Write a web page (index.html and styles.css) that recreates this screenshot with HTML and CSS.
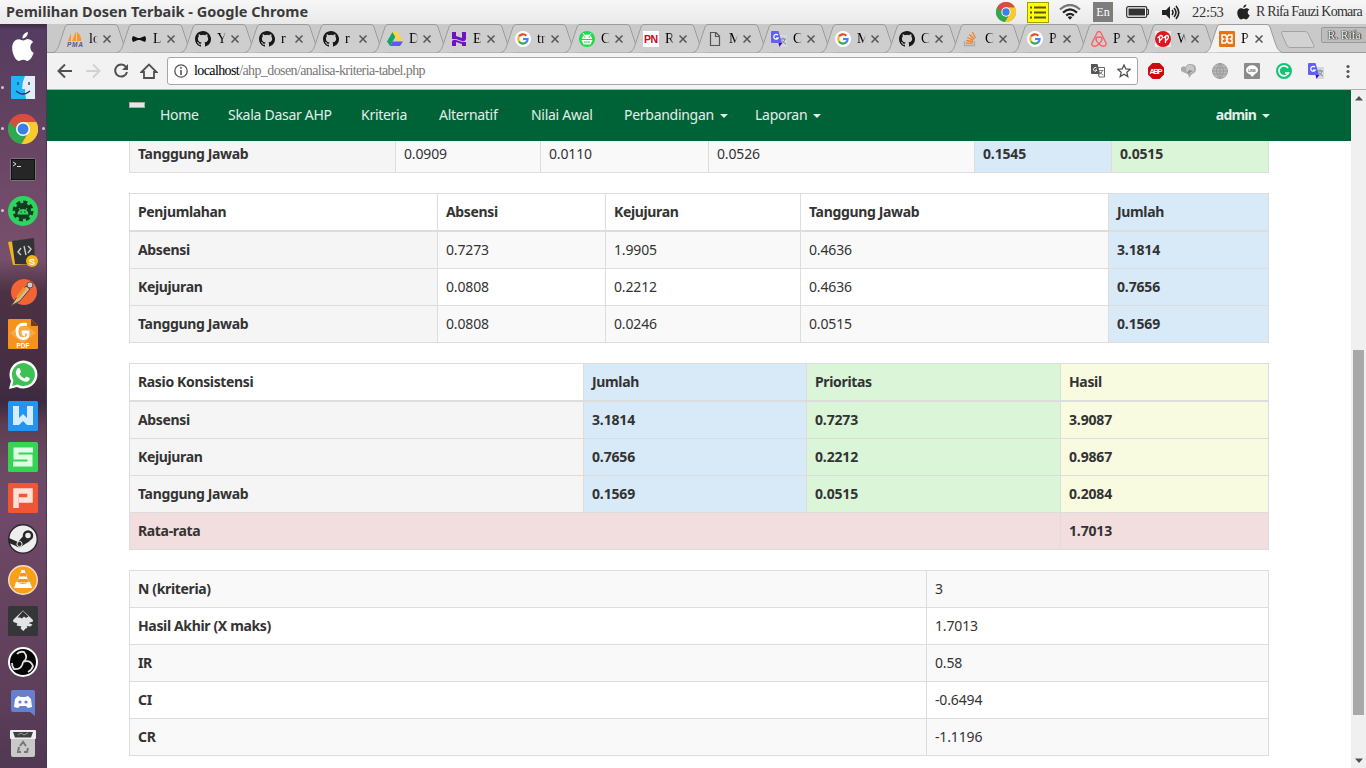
FILE: index.html
```html
<!DOCTYPE html>
<html lang="id">
<head>
<meta charset="utf-8">
<title>Pemilihan Dosen Terbaik</title>
<link rel="stylesheet" href="styles.css">
</head>
<body>
<svg class="defs" width="0" height="0">
  <symbol id="shape" viewBox="0 0 78 29"><path d="M0 28.5C5 27 5 24 12 3Q13 .5 15 .5H62Q64 .5 65 3C72 24 72 27 78 28.5" fill="currentColor" stroke="#9b9b9b"/></symbol>
  <symbol id="close" viewBox="0 0 8 8"><path d="M.5 .5l7 7M7.500 .5l-7 7" stroke="#555" stroke-width="1.5"/></symbol>
  <symbol id="github" viewBox="0 0 16 16"><path fill="#191717" d="M8 0C3.580 0 0 3.580 0 8c0 3.540 2.290 6.530 5.470 7.590.4.070.55-.17.55-.38 0-.19-.010-.82-.010-1.490-2.010.37-2.530-.49-2.690-.94-.090-.23-.48-.94-.82-1.130-.28-.15-.68-.52-.010-.53.630-.010 1.080.58 1.230.82.720 1.210 1.870.87 2.330.66.070-.52.28-.87.510-1.070-1.780-.2-3.640-.89-3.640-3.950 0-.87.310-1.590.82-2.150-.080-.2-.36-1.020.080-2.120 0 0 .67-.21 2.200.82a7.600 7.600 0 0 1 4 0c1.530-1.040 2.200-.82 2.200-.82.440 1.100.16 1.920.080 2.120.510.56.82 1.270.82 2.150 0 3.070-1.870 3.750-3.650 3.950.29.25.54.73.54 1.480 0 1.070-.010 1.930-.010 2.200 0 .21.15.46.55.38A8 8 0 0 0 8 0z"/></symbol>
  <symbol id="google" viewBox="0 0 16 16"><circle cx="8" cy="8" r="8" fill="#fff"/><g fill="none" stroke-width="2.200"><path d="M4 5.500A4.600 4.600 0 0 1 11.300 4.700" stroke="#ea4335"/><path d="M4 5.500a4.800 4.800 0 0 0 0 5" stroke="#fbbc05"/><path d="M4 10.500a4.700 4.700 0 0 0 7.200.8" stroke="#34a853"/><path d="M8 8h4.600a4.600 4.600 0 0 1-1.400 3.400" stroke="#4285f4"/></g></symbol>
  <symbol id="gtrans" viewBox="0 0 16 16"><path d="M7 4h9v12H9z" fill="#d5d8dc"/><path d="M9.500 8h5.500M12 6.500V8M14 8c-.6 2.500-2 4-4 5M11 9.500c1 1.600 2 2.500 4 3.500" stroke="#71869a" fill="none"/><path d="M1 0h6.500L11 12H1Q0 12 0 11V1Q0 0 1 0z" fill="#6360f5"/><path d="M7.500 12H11l-2.500 4z" fill="#4b00b5"/><path d="M7 4.200A2.400 2.400 0 1 0 7.300 7H5" fill="none" stroke="#fff" stroke-width="1.200"/></symbol>
  <symbol id="apple" viewBox="0 0 24 24"><path d="M16.500 0c.2 2.800-2.400 5.400-5 5.300C11.200 2.700 13.800.3 16.500 0zM21.900 17.200c-1.200 3.100-3.500 6.600-5.700 6.700-1.600 0-2.200-1-4-1s-2.500 1-4 1C5.500 24 2 18.500 2 13.300 2 8.700 5 6 8 6c1.700 0 3 1.100 4.200 1.100S14.900 5.800 17 5.900c1.500.1 3.300.8 4.300 2.400-3.700 2.200-3.100 7.400.6 8.900z" fill="currentColor"/></symbol>
  <symbol id="chrome" viewBox="0 0 30 30"><circle cx="15" cy="15" r="15" fill="#dd4b3e"/><path d="M2 7.500A15 15 0 0 0 13.500 30L20 18z" fill="#2da94f"/><path d="M15 8H28.300A15 15 0 0 1 13.500 30L20.500 18z" fill="#f7cb2d"/><path d="M2 7.500L9 18l6-10z" fill="#2da94f"/><path d="M2 7.500A15 15 0 0 1 28.300 8H15a7 7 0 0 0-6.500 4.500L6.500 14z" fill="#dd4b3e"/><circle cx="15" cy="15" r="7" fill="#fff"/><circle cx="15" cy="15" r="5.500" fill="#3d7fe6"/></symbol>
</svg>

<div class="screen">
  <header class="panel">
    <div class="panel-title">Pemilihan Dosen Terbaik - Google Chrome</div>
    <div class="indicators">
      <svg class="i-chrome" width="20" height="20"><use href="#chrome"/></svg>
      <svg class="i-list" width="22" height="21" viewBox="0 0 22 21"><rect x=".5" y=".5" width="21" height="20" fill="#ff0" stroke="#a0a000"/><path d="M3 5.500h2M3 10.500h2M3 15.500h2M7 5.500h12M7 10.500h12M7 15.500h12" stroke="#55551a" stroke-width="1.800"/></svg>
      <svg class="i-wifi" width="22" height="16" viewBox="0 0 22 16"><g fill="none" stroke-width="2.300"><path d="M1 5.500Q11-3.500 21 5.500" stroke="#777"/><path d="M4 8.600q7-6.400 14 0M7.200 11.500q3.800-3.200 7.600 0" stroke="#222"/></g><path d="M8.700 13.200q2.300-1.800 4.600 0L11 15.700z" fill="#222"/></svg>
      <span class="lang">En</span>
      <svg class="i-batt" width="24" height="12" viewBox="0 0 24 12"><rect x=".7" y=".7" width="20" height="10.600" rx="1.500" fill="#fff" stroke="#333" stroke-width="1.300"/><rect x="2.500" y="2.500" width="16.500" height="7" fill="#333"/><path d="M21 3.500h1.500v5H21" fill="none" stroke="#333"/></svg>
      <svg class="i-vol" width="18" height="15" viewBox="0 0 18 15"><path d="M0 5h4l4-4v13l-4-4H0z" fill="#222"/><path d="M10 5q2 2.500 0 5M12 3q4 4.500 0 9M14 1q5.500 6.500 0 13" fill="none" stroke="#222" stroke-width="1.600"/></svg>
      <span class="clock">22:53</span>
      <svg class="i-apple" width="15" height="16"><use href="#apple"/></svg>
      <span class="user">R Rifa Fauzi Komara</span>
    </div>
  </header>

  <aside class="dock">
    <div class="app"><svg width="26" height="29" viewBox="0 0 24 24" preserveAspectRatio="none"><use href="#apple"/></svg></div>
    <div class="app run"><svg width="24" height="23" viewBox="0 0 24 23"><rect width="24" height="23" rx="1" fill="#20b4f8"/><path d="M14 0h10v23H15Q14 17 14 13h-3Q11 6 14 0z" fill="#e3ecf7"/><path d="M7 6v3M18 6v3M5 15q7 6 14 0" fill="none" stroke="#1b355b" stroke-width="1.300"/></svg></div>
    <div class="app run focus"><svg width="30" height="30"><use href="#chrome"/></svg></div>
    <div class="app"><svg width="26" height="23" viewBox="0 0 26 23"><rect x=".5" y=".5" width="25" height="22" rx="1" fill="#262626" stroke="#777"/><rect x="1.500" y="1.500" width="23" height="20" fill="none" stroke="#111"/><path d="M3 4l3 2-3 2M7 8.500h4" stroke="#ddd" fill="none"/></svg></div>
    <div class="app run"><svg width="30" height="30" viewBox="0 0 30 30"><circle cx="15" cy="15" r="15" fill="#2fd45e"/><circle cx="15" cy="15" r="8" fill="#153b22"/><circle cx="15" cy="15" r="9" fill="none" stroke="#153b22" stroke-width="3" stroke-dasharray="4.070 3"/><path d="M9.500 18.500a5.500 5.500 0 0 1 11 0z" fill="#2fd45e"/><path d="M11 12l1.500 2.500M19 12l-1.500 2.500" stroke="#2fd45e"/><path d="M12.500 16h1.500M16 16h1.500" stroke="#153b22"/></svg></div>
    <div class="app"><svg width="30" height="30" viewBox="0 0 30 30"><path d="M0 5l22-3 3 25-20 1z" fill="#eeb420"/><path d="M4 4l22-3 1 26H7z" fill="#303234"/><path d="M13 11l-3 4 3 3M20 9l3 3-3 4M16 9l2 9" fill="none" stroke="#ccc" stroke-width="1.400"/><circle cx="24" cy="24" r="6" fill="#f4b31b"/><text x="24" y="27.500" class="tiny" text-anchor="middle" font-size="9">S</text></svg></div>
    <div class="app"><svg width="30" height="30" viewBox="0 0 30 30"><circle cx="16" cy="14" r="13" fill="#f26336"/><path d="M3 28l6-9L18 8l4 3-10 12z" fill="#d8ba8c" stroke="#5c4036"/><path d="M9 20l8-10" stroke="#f0952b" stroke-width="3"/><circle cx="22" cy="7" r="3" fill="#ccc" stroke="#555"/></svg></div>
    <div class="app"><svg width="30" height="30" viewBox="0 0 30 30"><path d="M1 0h22l7 7v22q0 1-1 1H1q-1 0-1-1V1q0-1 1-1z" fill="#f6931f"/><path d="M23 0v7h7" fill="#6c3f18"/><path d="M15 4L28 14 15 24 2 14z" fill="#f9a848"/><path d="M19 5.500Q9 4 9 12t7 7.500q5 0 4-6.500h-5q0 3 2 3" fill="none" stroke="#fff" stroke-width="2.800"/><text x="15" y="28.500" class="tiny" text-anchor="middle" font-size="6.500">PDF</text></svg></div>
    <div class="app"><svg width="30" height="30" viewBox="0 0 30 30"><path d="M1 29l2-8A14 14 0 1 1 9 27z" fill="#fff"/><path d="M4 26l1.500-5.500A11.500 11.500 0 1 1 9.500 24.500z" fill="#3ec154"/><path d="M9 9q2-2 3 0l1 3-1.500 2q1.500 3 5 4.500l2-2 3 1.500q1 1-1 3-3 2-8-1.500-7-5-3.500-10.500z" fill="#fff"/></svg></div>
    <div class="app"><svg width="30" height="30" viewBox="0 0 30 30"><rect width="30" height="30" rx="1.500" fill="#1f96f6"/><path d="M5 5h6v12l4-4 4 4V5h6v19h-6l-4-4-4 4H5z" fill="#d6ecff"/></svg></div>
    <div class="app"><svg width="30" height="30" viewBox="0 0 30 30"><rect width="30" height="30" rx="1.500" fill="#36d455"/><path d="M25 8H8v7h14v7H5" fill="none" stroke="#e0ffe5" stroke-width="5"/></svg></div>
    <div class="app"><svg width="30" height="30" viewBox="0 0 30 30"><rect width="30" height="30" rx="1.500" fill="#ee5634"/><path d="M8 25V8h14v9H11" fill="none" stroke="#ffe1da" stroke-width="5.500"/></svg></div>
    <div class="app"><svg width="30" height="30" viewBox="0 0 30 30"><circle cx="15" cy="15" r="14.300" fill="#eee" stroke="#28282a" stroke-width="1.400"/><path d="M1 14l9 4 6-7 6 6-8 5a4 4 0 0 1-6 0L1 19z" fill="#28282a"/><circle cx="20" cy="11.500" r="4" fill="#eee" stroke="#28282a" stroke-width="2.500"/><circle cx="11.500" cy="20" r="2.600" fill="none" stroke="#eee"/></svg></div>
    <div class="app"><svg width="30" height="30" viewBox="0 0 30 30"><circle cx="15" cy="15" r="14.300" fill="#f9a01b" stroke="#f3dfc7" stroke-width="1.400"/><path d="M13.500 5h3l4.500 13H9z" fill="#fff"/><path d="M12.500 8h5l1 3.500h-7z" fill="#f79420"/><path d="M10.500 14h9l1 3.500h-11z" fill="#f79420"/><path d="M8 17h1q6 4 12 0h1l2 6H6z" fill="#fff"/></svg></div>
    <div class="app"><svg width="30" height="30" viewBox="0 0 30 30"><rect width="30" height="30" rx="1.500" fill="#343638"/><path d="M15 4.500l9.500 9q1.500 2-1 2.500l-3 1 4 1.500-2 2-4-.5q2 2-1 2.500l-2 2.500-3-2.500 1-2-5-1 1-2-4-1.500q-1-1 0-2.500z" fill="#e4e4e4"/><path d="M15 5l5.500 5.500-2.500 1.500-2-1.500-2 2-2-1-2.500 0z" fill="#333"/></svg></div>
    <div class="app"><svg width="30" height="30" viewBox="0 0 30 30"><circle cx="15" cy="15" r="14" fill="#050505" stroke="#fff" stroke-width="2"/><path d="M15 15q6-4 1-10Q11 4 9 7M15 15q-1 8-9 7Q4 20 4 16M15 15q7-3 10 4-1 4-5 6" fill="none" stroke="#e2e2e2" stroke-width="1.800"/></svg></div>
    <div class="app"><svg width="24" height="26" viewBox="0 0 24 26"><path d="M2 0h20q2 0 2 2v24l-5-4H2q-2 0-2-2V2Q0 0 2 0z" fill="#6480ce"/><path d="M7 6l3 1h4l3-1 3 3 1 8-4 1-2-2H9l-2 2-4-1 1-8z" fill="#fff"/><circle cx="9" cy="12" r="1.600" fill="#6480ce"/><circle cx="15" cy="12" r="1.600" fill="#6480ce"/></svg></div>
    <div class="app"><svg width="26" height="27" viewBox="0 0 26 27"><path d="M1 1h24v24q0 2-2 2H3q-2 0-2-2z" fill="#c9c9c9"/><rect y="0" width="26" height="9" rx="1" fill="#eee"/><path d="M3 2h20l-2 5.500H5z" fill="#404040"/><path d="M8 5l3-2 3 2 4-2" stroke="#999" fill="none"/><path d="M10 16l3-4 3 4M18 18l-1 4h-3M11 22H8l1-5" fill="none" stroke="#777" stroke-width="2"/></svg></div>
  </aside>

  <main class="browser">
    <div class="tabstrip">
      <div class="tab"><svg class="shape"><use href="#shape"/></svg><svg class="fav" viewBox="0 0 16 16"><path d="M1 10l3-8v8zM5 10l4-10v10zM10 10V1q5 4 4 9z" fill="#f8991d"/><text x="0" y="15.500" font-size="6.500" textLength="16" class="pma">PMA</text></svg><span>lo</span><svg class="x"><use href="#close"/></svg></div>
      <div class="tab"><svg class="shape"><use href="#shape"/></svg><svg class="fav" viewBox="0 0 16 16"><path d="M2 5l5 2h2l5-2q2 3 0 6l-5-2H7l-5 2Q0 8 2 5z" fill="#111"/></svg><span>L</span><svg class="x"><use href="#close"/></svg></div>
      <div class="tab"><svg class="shape"><use href="#shape"/></svg><svg class="fav"><use href="#github"/></svg><span>Y</span><svg class="x"><use href="#close"/></svg></div>
      <div class="tab"><svg class="shape"><use href="#shape"/></svg><svg class="fav"><use href="#github"/></svg><span>r</span><svg class="x"><use href="#close"/></svg></div>
      <div class="tab"><svg class="shape"><use href="#shape"/></svg><svg class="fav"><use href="#github"/></svg><span>r</span><svg class="x"><use href="#close"/></svg></div>
      <div class="tab"><svg class="shape"><use href="#shape"/></svg><svg class="fav" viewBox="0 0 16 16"><path d="M5.500 1L0 10.500 3 15l5.500-9.500z" fill="#11a861"/><path d="M5.500 1h5L16 10.500h-5z" fill="#ffd24d"/><path d="M5.500 10.500H16L13 15H3z" fill="#5b5bf0"/></svg><span>D</span><svg class="x"><use href="#close"/></svg></div>
      <div class="tab"><svg class="shape"><use href="#shape"/></svg><svg class="fav" viewBox="0 0 16 16"><path d="M1 1h4v4l6 2V1h4v7q-1 3-4 2L5 8H1zM1 10q2-2 4-1l6 2h4v4h-4v-2l-6-2v4H1z" fill="#7210c4"/></svg><span>E</span><svg class="x"><use href="#close"/></svg></div>
      <div class="tab"><svg class="shape"><use href="#shape"/></svg><svg class="fav"><use href="#google"/></svg><span>tr</span><svg class="x"><use href="#close"/></svg></div>
      <div class="tab"><svg class="shape"><use href="#shape"/></svg><svg class="fav" viewBox="0 0 16 16"><circle cx="8" cy="8" r="8" fill="#1edc48"/><path d="M3 8a5 4.500 0 0 1 10 0zM2.500 9h11l-2 4.500h-7z" fill="#fff"/><path d="M4 2l2 3M12 2l-2 3" stroke="#fff"/><path d="M5 6h1.500M9.500 6H11M5 11h6" stroke="#1edc48"/></svg><span>C</span><svg class="x"><use href="#close"/></svg></div>
      <div class="tab"><svg class="shape"><use href="#shape"/></svg><svg class="fav" viewBox="0 0 16 16"><path d="M0 0h16v16H0z" fill="#fff"/><text x="1" y="12" font-size="10.500" textLength="14" class="pn">PN</text></svg><span>R</span><svg class="x"><use href="#close"/></svg></div>
      <div class="tab"><svg class="shape"><use href="#shape"/></svg><svg class="fav" viewBox="0 0 16 16"><path d="M3.500 1.500H9l3.500 3.500v9.500h-9zM8.500 1.500V5.500h4" fill="none" stroke="#555" stroke-width="1.200"/></svg><span>M</span><svg class="x"><use href="#close"/></svg></div>
      <div class="tab"><svg class="shape"><use href="#shape"/></svg><svg class="fav"><use href="#gtrans"/></svg><span>C</span><svg class="x"><use href="#close"/></svg></div>
      <div class="tab"><svg class="shape"><use href="#shape"/></svg><svg class="fav"><use href="#google"/></svg><span>M</span><svg class="x"><use href="#close"/></svg></div>
      <div class="tab"><svg class="shape"><use href="#shape"/></svg><svg class="fav"><use href="#github"/></svg><span>C</span><svg class="x"><use href="#close"/></svg></div>
      <div class="tab"><svg class="shape"><use href="#shape"/></svg><svg class="fav" viewBox="0 0 16 16"><path d="M1.500 10v4.500h10V10" fill="none" stroke="#aaa" stroke-width="1.300"/><path d="M3 12.200h7M3.300 9.500l6.700 1M4.300 6.500l6.200 2.700M6.300 3.500l5 4.500M9.300 1l3.200 6" stroke="#f48024" stroke-width="1.300"/></svg><span>C</span><svg class="x"><use href="#close"/></svg></div>
      <div class="tab"><svg class="shape"><use href="#shape"/></svg><svg class="fav"><use href="#google"/></svg><span>P</span><svg class="x"><use href="#close"/></svg></div>
      <div class="tab"><svg class="shape"><use href="#shape"/></svg><svg class="fav" viewBox="0 0 16 16"><path d="M8 13C3 8 5 6 8 6s5 2 0 7c-4 4-8 2-7-1L6 2q2-3 4 0l5 10c1 3-3 5-7 1z" fill="none" stroke="#ff5a5f" stroke-width="1.300"/></svg><span>P</span><svg class="x"><use href="#close"/></svg></div>
      <div class="tab"><svg class="shape"><use href="#shape"/></svg><svg class="fav" viewBox="0 0 16 16"><path d="M0 0h16v16H0z" fill="#eee"/><circle cx="8" cy="8" r="8" fill="#e5131d"/><path d="M2.500 7l3-2.500q3 0 1.500 3L4.500 10M4.500 6v6M8.500 7l3-2.500q3 0 1.500 3L10.500 10M10.500 6v6" fill="none" stroke="#fff" stroke-width="1.300"/></svg><span>W</span><svg class="x"><use href="#close"/></svg></div>
      <div class="tab active"><svg class="shape"><use href="#shape"/></svg><svg class="fav" viewBox="0 0 16 16"><rect width="16" height="16" rx="1" fill="#ec7211"/><path d="M3 4h3.500L8 6.500 9.500 4H13v3l-1.500 1L13 9v3H9.500L8 9.500 6.500 12H3V9l1.500-1L3 7zM6.500 8h3" fill="none" stroke="#fff" stroke-width="1.500"/></svg><span>P</span><svg class="x"><use href="#close"/></svg></div>
      <svg class="newtab" width="34" height="17" viewBox="0 0 34 17"><path d="M2 .5h22q2 0 3 2l6 12q.5 2-1.500 2H9q-2 0-3-2L.5 2.500Q0 .5 2 .5z" fill="#d2d2d2" stroke="#a3a3a3"/></svg>
      <div class="profile">R. Rifa</div>
    </div>

    <div class="toolbar">
      <svg width="16" height="16" viewBox="0 0 16 16"><path d="M15 8H2M8 1.500L1.500 8 8 14.500" fill="none" stroke="#505050" stroke-width="2"/></svg>
      <svg width="16" height="16" viewBox="0 0 16 16"><path d="M1 8h13M8 1.500L14.500 8 8 14.500" fill="none" stroke="#d2d2d2" stroke-width="2"/></svg>
      <svg width="16" height="16" viewBox="0 0 16 16"><path d="M13 4A6 6 0 1 0 14 9" fill="none" stroke="#505050" stroke-width="2"/><path d="M15 1v6H9z" fill="#505050"/></svg>
      <svg class="home" width="18" height="16" viewBox="0 0 18 16"><path d="M1.500 9L9 1.500 16.500 9H14v6H4V9z" fill="none" stroke="#505050" stroke-width="1.800"/></svg>
      <div class="omnibox">
        <svg width="14" height="14" viewBox="0 0 14 14"><circle cx="7" cy="7" r="6.200" fill="none" stroke="#555" stroke-width="1.300"/><path d="M7 3v1.700M7 6v5" stroke="#555" stroke-width="1.600"/></svg>
        <span class="url"><b>localhost</b>/ahp_dosen/analisa-kriteria-tabel.php</span>
        <svg class="translate" width="15" height="14" viewBox="0 0 15 14"><path d="M6.500 3.500h7v9.500H8z" fill="#fff" stroke="#666"/><path d="M8 6.500h4.500M11.500 6.500q-1 3-3 4M9 8q1 2 3.500 3" fill="none" stroke="#666" stroke-width=".8"/><path d="M0 0h6.500L9 10H1Q0 10 0 9z" fill="#555"/><path d="M5.500 4A1.800 1.800 0 1 0 6 6H4.500" fill="none" stroke="#fff"/></svg>
        <svg width="14" height="14" viewBox="0 0 14 14"><path d="M7 1l1.800 4 4.300.4-3.300 2.900 1 4.300L7 10.300l-3.800 2.300 1-4.300L.9 5.400 5.200 5z" fill="none" stroke="#505050" stroke-width="1.300"/></svg>
      </div>
      <div class="extensions">
        <svg width="16" height="16" viewBox="0 0 16 16"><path d="M4.500 0h7L16 4.500v7L11.500 16h-7L0 11.500v-7z" fill="#c70d0d"/><text x="1.500" y="11" font-size="7.500" textLength="13" class="tiny">ABP</text></svg>
        <svg width="16" height="16" viewBox="0 0 16 16"><path d="M1 5q2-3 5-1 0-3 4-3 6 0 6 5 0 4-4 5l-3 4-1-4-3-1-4-2z" fill="#aaa"/><circle cx="10" cy="6" r="4" fill="#c7c7c7"/><path d="M7 11l2-4 4 1z" fill="#888"/></svg>
        <svg width="16" height="16" viewBox="0 0 16 16"><circle cx="8" cy="8" r="7.500" fill="#b9b9b9" stroke="#a1a1a1"/><path d="M1 5h14M0 8h16M1 11h14M8 0v16M8 0Q1 8 8 16Q15 8 8 0" fill="none" stroke="#969696" stroke-width=".8"/></svg>
        <svg width="16" height="16" viewBox="0 0 16 16"><rect width="16" height="16" rx="1" fill="#8a8a8a"/><ellipse cx="8" cy="7" rx="6" ry="4.700" fill="#fff"/><path d="M6 11h5l-3 3z" fill="#fff"/><text x="4" y="8.500" font-size="4" textLength="8" class="line">LINE</text></svg>
        <svg width="16" height="16" viewBox="0 0 16 16"><circle cx="8" cy="8" r="8" fill="#13c377"/><path d="M12 5a5 5 0 1 0 .5 5H9" fill="none" stroke="#fff" stroke-width="1.700"/></svg>
        <svg width="16" height="16"><use href="#gtrans"/></svg>
        <svg width="16" height="16" viewBox="0 0 16 16"><g fill="#555"><circle cx="8" cy="3.500" r="1.600"/><circle cx="8" cy="8.500" r="1.600"/><circle cx="8" cy="13.500" r="1.600"/></g></svg>
      </div>
    </div>

    <div class="viewport">
      <div class="page">
        <nav class="navbar">
          <div class="container">
            <button class="toggle"></button>
            <a>Home</a><a>Skala Dasar AHP</a><a>Kriteria</a><a>Alternatif</a><a>Nilai Awal</a><a>Perbandingan<i class="caret"></i></a><a>Laporan<i class="caret"></i></a>
            <a class="account"><b>admin</b><i class="caret"></i></a>
          </div>
        </nav>
        <div class="container content">
          <table class="totals">
            <colgroup><col class="w266"><col class="w145"><col class="w168"><col class="w266"><col class="w137"><col></colgroup>
            <tbody><tr><th class="label">Tanggung Jawab</th><td>0.0909</td><td>0.0110</td><td>0.0526</td><th class="info">0.1545</th><th class="success">0.0515</th></tr></tbody>
          </table>
          <table>
            <colgroup><col class="w308"><col class="w168"><col class="w195"><col class="w308"><col></colgroup>
            <thead><tr><th>Penjumlahan</th><th>Absensi</th><th>Kejujuran</th><th>Tanggung Jawab</th><th class="info">Jumlah</th></tr></thead>
            <tbody>
              <tr><th class="label">Absensi</th><td>0.7273</td><td>1.9905</td><td>0.4636</td><th class="info">3.1814</th></tr>
              <tr><th class="label">Kejujuran</th><td>0.0808</td><td>0.2212</td><td>0.4636</td><th class="info">0.7656</th></tr>
              <tr><th class="label">Tanggung Jawab</th><td>0.0808</td><td>0.0246</td><td>0.0515</td><th class="info">0.1569</th></tr>
            </tbody>
          </table>
          <table>
            <colgroup><col class="w454"><col class="w223"><col class="w254"><col></colgroup>
            <thead><tr><th>Rasio Konsistensi</th><th class="info">Jumlah</th><th class="success">Prioritas</th><th class="warning">Hasil</th></tr></thead>
            <tbody>
              <tr><th class="label">Absensi</th><th class="info">3.1814</th><th class="success">0.7273</th><th class="warning">3.9087</th></tr>
              <tr><th class="label">Kejujuran</th><th class="info">0.7656</th><th class="success">0.2212</th><th class="warning">0.9867</th></tr>
              <tr><th class="label">Tanggung Jawab</th><th class="info">0.1569</th><th class="success">0.0515</th><th class="warning">0.2084</th></tr>
              <tr><th class="danger" colspan="3">Rata-rata</th><th class="danger">1.7013</th></tr>
            </tbody>
          </table>
          <table>
            <colgroup><col class="w797"><col></colgroup>
            <tbody>
              <tr><th>N (kriteria)</th><td>3</td></tr>
              <tr><th>Hasil Akhir (X maks)</th><td>1.7013</td></tr>
              <tr><th>IR</th><td>0.58</td></tr>
              <tr><th>CI</th><td>-0.6494</td></tr>
              <tr><th>CR</th><td>-1.1196</td></tr>
            </tbody>
          </table>
        </div>
      </div>
      <div class="scrollbar">
        <svg width="8" height="5" viewBox="0 0 8 5"><path d="M0 4.500L4 0l4 4.500z" fill="#505050"/></svg>
        <div class="thumb"></div>
        <svg width="8" height="5" viewBox="0 0 8 5"><path d="M0 .5L4 5 8 .5z" fill="#505050"/></svg>
      </div>
    </div>
  </main>
</div>
</body>
</html>
```
FILE: styles.css
```css
* { box-sizing: border-box; }
body { margin: 0; overflow: hidden; font-family: "Noto Sans", "Open Sans", sans-serif; font-size: 14px; line-height: 20px; color: #333; }
svg { display: block; flex: none; }
.defs { position: absolute; }
.tiny { font-family: "Liberation Sans", sans-serif; font-weight: bold; fill: #fff; }
.pma { font-family: "Liberation Sans", sans-serif; font-weight: bold; font-style: italic; fill: #5c5390; }
.pn { font-family: "Liberation Sans", sans-serif; font-weight: bold; fill: #d0021b; }
.line { font-family: "Liberation Sans", sans-serif; font-weight: bold; fill: #777; }

.screen { display: grid; grid-template: 24px 744px / 47px 1319px; width: 1366px; height: 768px; }

/* top panel */
.panel { grid-column: 1 / 3; display: flex; align-items: center; justify-content: space-between; padding: 0 5px 0 6px; background: linear-gradient(#f7f7f7, #e9e9e9); }
.panel-title { font-weight: bold; font-size: 14.500px; line-height: 22px; height: 24px; color: #3c3b3b; white-space: nowrap; }
.indicators { display: flex; align-items: center; height: 24px; font-family: "Liberation Serif", serif; color: #333; }
.i-chrome { margin-left: 1px; }
.i-list { margin-left: 11px; }
.i-wifi { margin-left: 10px; }
.lang { margin-left: 12px; width: 20px; height: 20px; background: #7d7d7d; color: #fff; font-size: 12px; text-align: center; }
.i-batt { margin-left: 13px; }
.i-vol { margin-left: 12px; }
.clock { margin-left: 12px; width: 32px; font-size: 14.500px; letter-spacing: -.3px; }
.i-apple { margin-left: 12px; color: #222; }
.user { margin-left: 5px; width: 105px; font-size: 14px; letter-spacing: -.75px; white-space: nowrap; }

/* dock */
.dock { padding-top: 2px; display: grid; grid-auto-rows: 41px; color: #fff; border-right: 1px solid #4b3658; background: linear-gradient(#3c2c42 0, #553c60 6px, #60415f 80px, #744c6b 190px, #76506a 235px, #4c3144 268px, #462e43 350px, #3b2a40 378px, #5c3d51 400px, #694a62 440px, #70496a 490px, #66445f 570px, #5c3e59 680px, #503852 744px); }
.app { display: flex; align-items: center; justify-content: center; position: relative; }
.run::before, .focus::after { content: ""; position: absolute; left: 1px; top: 19px; width: 3px; height: 3px; border-radius: 50%; background: #cfc6d0; }
.focus::after { left: 42px; }

/* browser frame */
.browser { display: grid; grid-template-rows: 29px 37px 678px; }
.tabstrip { display: flex; align-items: flex-start; padding-left: 6px; background: linear-gradient(#c9c9c9 28px, #9b9b9b 28px); }
.tab { position: relative; flex: none; display: flex; align-items: center; width: 78px; height: 29px; padding: 1px 0 0 14px; margin-right: -14px; color: #cecece; }
.shape { position: absolute; left: 0; top: 0; width: 78px; height: 29px; }
.fav { position: relative; width: 16px; height: 16px; }
.tab span { position: relative; margin: 0 5px 0 6px; width: 9px; overflow: hidden; font: 14px/20px "Liberation Serif", serif; color: #000; -webkit-mask-image: linear-gradient(90deg, #000 55%, transparent); mask-image: linear-gradient(90deg, #000 55%, transparent); }
.x { position: relative; width: 8px; height: 8px; }
.active { z-index: 1; color: #f2f2f2; }
.newtab { margin: 7px 0 0 12px; }
.profile { margin: 3px 0 0 6px; width: 46px; height: 16px; border: 1px solid #999; border-radius: 2px; background: #bdbdbd; font: 11.500px/14px "Liberation Serif", serif; text-align: center; color: #fff; text-shadow: 0 0 1px #111, 0 0 1px #111, 1px 0 1px #333; white-space: nowrap; }

.toolbar { display: flex; align-items: center; gap: 12px; padding: 0 9px 0 10px; background: #f2f2f2; border-bottom: 1px solid #b0b0b0; }
.home { margin-left: -1px; }
.omnibox { display: flex; align-items: center; width: 971px; height: 28px; margin-left: -3px; padding: 0 6px; background: #fff; border: 1px solid #a6a6a6; border-radius: 3px; }
.url { margin-left: 6px; font: 14px/20px "Liberation Serif", serif; color: #777; white-space: nowrap; letter-spacing: -.6px; }
.url b { font-weight: normal; color: #000; }
.translate { margin: 0 11px 0 auto; }
.extensions { display: flex; gap: 16px; margin-left: -2px; }

/* web page */
.viewport { display: grid; grid-template-columns: 1304px 15px; background: #fff; }
.page { height: 678px; overflow: hidden; }
.container { width: 1140px; margin-left: 82px; }
.navbar { position: relative; z-index: 1; height: 51px; background: #006338; }
.navbar .container { display: grid; grid-template-columns: 31px 68px 133px 78px 92px 93px 131px 96px 1fr; height: 49px; align-items: center; color: #e2efe8; letter-spacing: -.28px; }
.navbar a { white-space: nowrap; }
.toggle { align-self: start; margin: 12px 0 0; padding: 0; width: 16px; height: 6px; border: 1px solid #a9a9a9; background: #e5e5e5; }
.caret { display: inline-block; margin-left: 6px; vertical-align: middle; border: 4px solid transparent; border-top-color: currentColor; border-bottom: 0; }
.account { text-align: right; letter-spacing: -.8px; margin-right: -1px; }
.content { margin-top: -6px; }
table { table-layout: fixed; width: 1140px; margin: 0 0 20px; border-collapse: collapse; }
th, td { padding: 8px; border: 1px solid #ddd; text-align: left; line-height: 20px; white-space: nowrap; }
th { letter-spacing: -.35px; }
td { letter-spacing: -.15px; }
tbody .info, tbody .success, tbody .warning, tbody .danger:last-child { letter-spacing: -.15px; }
thead th { border-bottom-width: 2px; }
tbody tr:nth-child(odd) { background: #f9f9f9; }
.label { background: #f5f5f5; }
.info { background: #d8eaf8; }
.success { background: #dbf5d8; }
.warning { background: #f9fbe0; }
.danger { background: #f2dede; }
.w137 { width: 137px; } .w145 { width: 145px; } .w168 { width: 168px; } .w195 { width: 195px; }
.w223 { width: 223px; } .w254 { width: 254px; } .w266 { width: 266px; } .w308 { width: 308px; }
.w454 { width: 454px; } .w797 { width: 797px; }

.scrollbar { display: flex; flex-direction: column; align-items: center; padding: 6px 0 5px; background: #f0f0f0; }
.thumb { width: 11px; height: 365px; margin: 249px 0 auto; background: #a8a8a8; }
```
